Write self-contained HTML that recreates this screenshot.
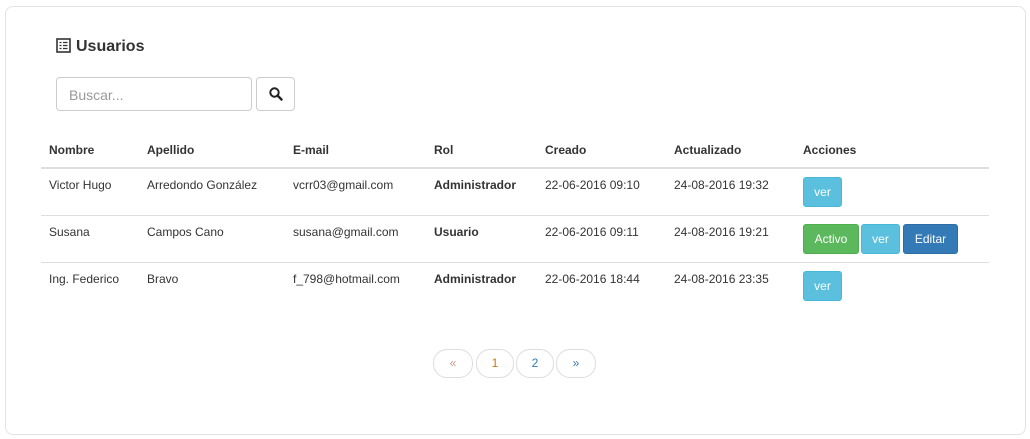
<!DOCTYPE html>
<html><head><style>
body{margin:0;background:#fff;font-family:"Liberation Sans",sans-serif;font-size:12px;color:#333;width:1030px;height:439px;overflow:hidden;position:relative}
.card{position:absolute;left:5px;top:6px;width:1019px;height:427px;background:#fff;border:1px solid #e3e3e3;border-radius:8px}
.abs{position:absolute}
h3{position:absolute;left:56px;top:38px;margin:0;font-size:16px;font-weight:bold;color:#333}
.inp{left:56px;top:77px;width:194px;height:32px;border:1px solid #ccc;border-radius:4px;background:#fff}
.inp span{position:absolute;left:12px;top:9px;color:#999;font-size:14px}
.sb{left:256px;top:77px;width:37px;height:32px;border:1px solid #ccc;border-radius:4px;background:#fff}
.t{position:absolute;white-space:nowrap}
.hd{font-weight:bold;top:143px}
.line{position:absolute;left:41px;width:948px;background:#ddd;height:1px}
.btn{position:absolute;color:#fff;border-radius:3px;text-align:center;height:28px;line-height:28px;font-size:12px}
.info{background:#5bc0de;border:1px solid #46b8da}
.pg{position:absolute;top:349px;height:27px;border:1px solid #ddd;border-radius:14px;text-align:center;line-height:27px;font-size:12px}
</style></head><body>
<div class="card"></div>
<svg class="abs" style="left:56px;top:38px" width="15" height="15" viewBox="0 0 15 15"><rect x="1" y="1" width="13" height="13" fill="none" stroke="#333" stroke-width="1.6"/><path d="M3.5 4.5h2M7 4.5h4.5M3.5 7.5h2M7 7.5h4.5M3.5 10.5h2M7 10.5h4.5" stroke="#333" stroke-width="1.3"/></svg>
<h3 style="left:76px">Usuarios</h3>
<div class="abs inp"><span>Buscar...</span></div>
<div class="abs sb"><svg style="position:absolute;left:12px;top:9px" width="14" height="14" viewBox="0 0 14 14"><circle cx="5.5" cy="5.5" r="4.2" fill="none" stroke="#222" stroke-width="2"/><path d="M8.5 8.5l4 4" stroke="#222" stroke-width="2.4" stroke-linecap="round"/></svg></div>
<div class="t hd" style="left:49px">Nombre</div>
<div class="t hd" style="left:147px">Apellido</div>
<div class="t hd" style="left:293px">E-mail</div>
<div class="t hd" style="left:434px">Rol</div>
<div class="t hd" style="left:545px">Creado</div>
<div class="t hd" style="left:674px">Actualizado</div>
<div class="t hd" style="left:803px">Acciones</div>
<div class="line" style="top:167px;height:2px"></div>
<div class="t" style="left:49px;top:178px">Victor Hugo</div>
<div class="t" style="left:147px;top:178px">Arredondo González</div>
<div class="t" style="left:293px;top:178px">vcrr03@gmail.com</div>
<div class="t" style="left:434px;top:178px;font-weight:bold">Administrador</div>
<div class="t" style="left:545px;top:178px">22-06-2016 09:10</div>
<div class="t" style="left:674px;top:178px">24-08-2016 19:32</div>
<div class="btn info" style="left:803px;top:177px;width:37px">ver</div>
<div class="line" style="top:215px"></div>
<div class="t" style="left:49px;top:225px">Susana</div>
<div class="t" style="left:147px;top:225px">Campos Cano</div>
<div class="t" style="left:293px;top:225px">susana@gmail.com</div>
<div class="t" style="left:434px;top:225px;font-weight:bold">Usuario</div>
<div class="t" style="left:545px;top:225px">22-06-2016 09:11</div>
<div class="t" style="left:674px;top:225px">24-08-2016 19:21</div>
<div class="btn" style="left:803px;top:224px;width:54px;background:#5cb85c;border:1px solid #4cae4c">Activo</div>
<div class="btn info" style="left:861px;top:224px;width:37px">ver</div>
<div class="btn" style="left:903px;top:224px;width:53px;background:#337ab7;border:1px solid #2e6da4">Editar</div>
<div class="line" style="top:262px"></div>
<div class="t" style="left:49px;top:272px">Ing. Federico</div>
<div class="t" style="left:147px;top:272px">Bravo</div>
<div class="t" style="left:293px;top:272px">f_798@hotmail.com</div>
<div class="t" style="left:434px;top:272px;font-weight:bold">Administrador</div>
<div class="t" style="left:545px;top:272px">22-06-2016 18:44</div>
<div class="t" style="left:674px;top:272px">24-08-2016 23:35</div>
<div class="btn info" style="left:803px;top:271px;width:37px">ver</div>
<div class="pg" style="left:433px;width:38px;color:#c98">«</div>
<div class="pg" style="left:476px;width:36px;color:#c77a00">1</div>
<div class="pg" style="left:516px;width:36px;color:#337ab7">2</div>
<div class="pg" style="left:556px;width:38px;color:#337ab7">»</div>
</body></html>
